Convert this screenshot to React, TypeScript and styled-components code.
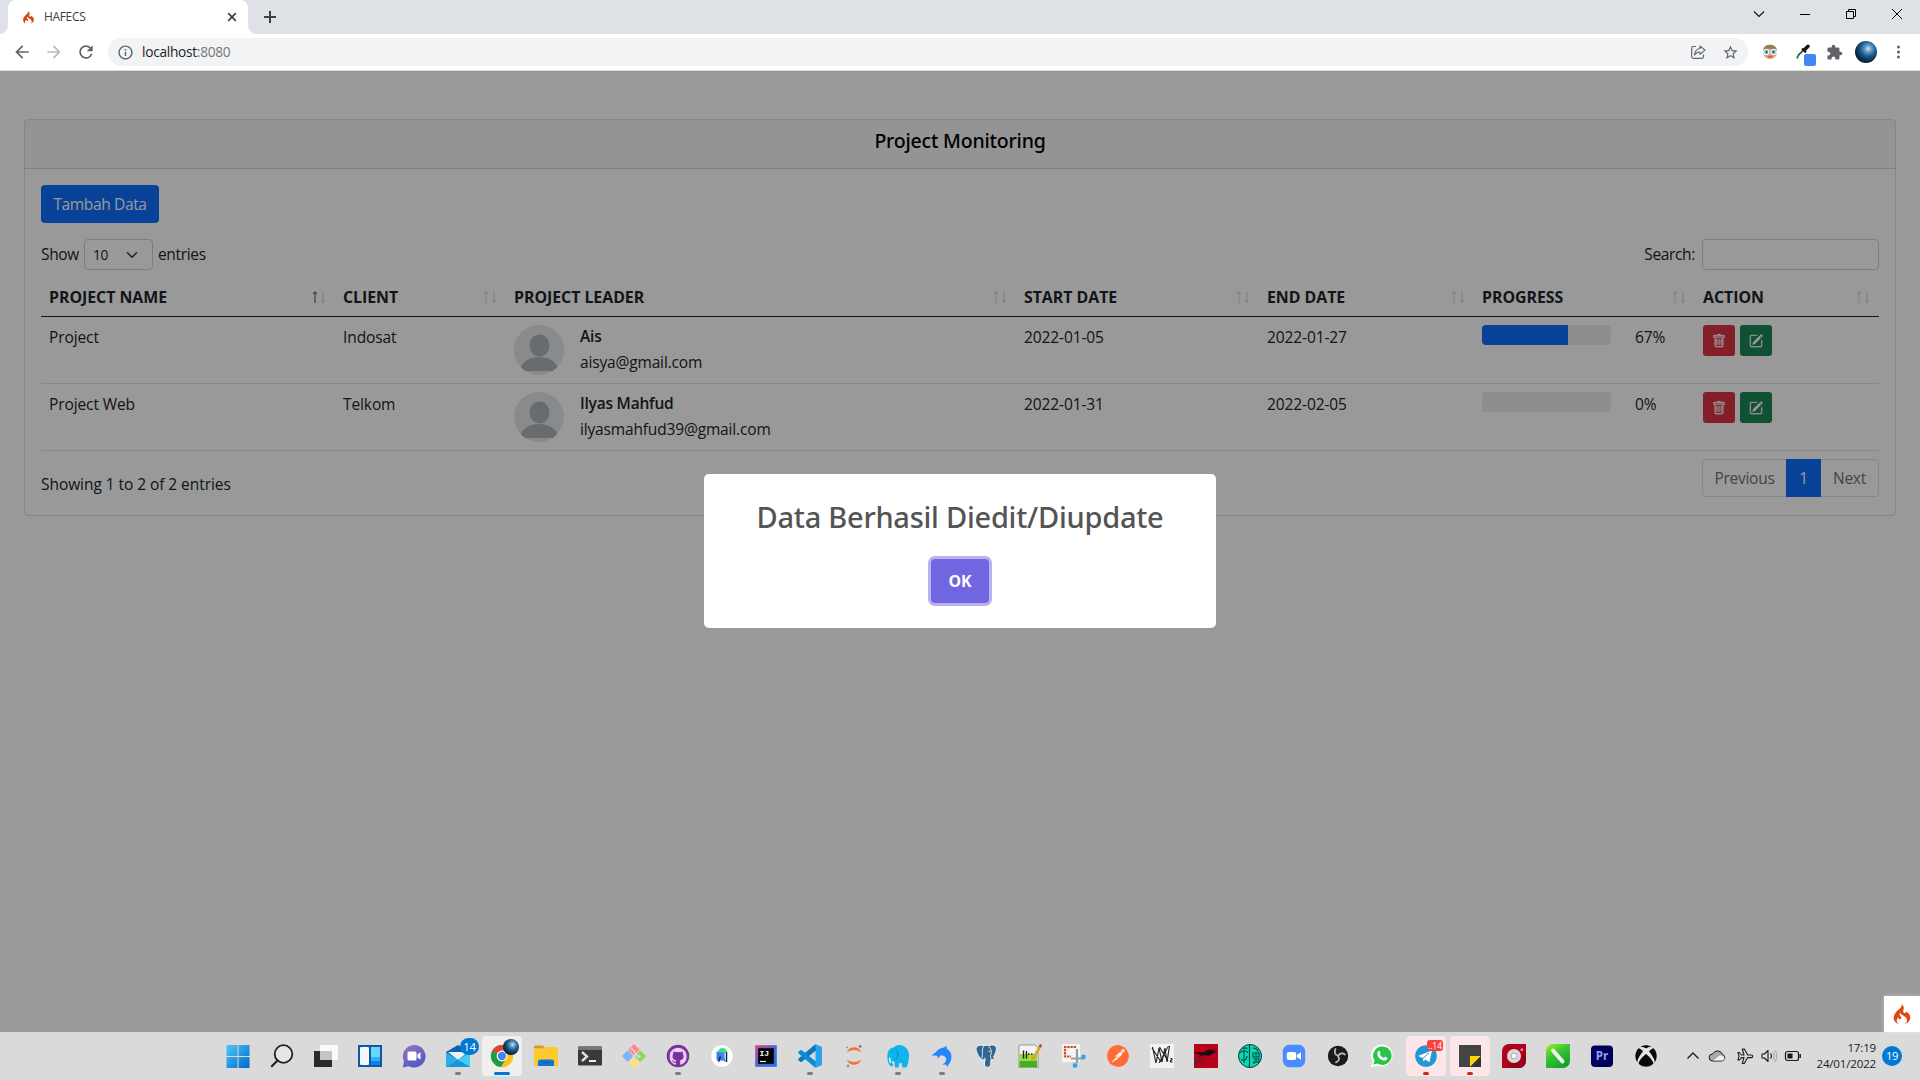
import React from "react";
import styled, { createGlobalStyle } from "styled-components";
import { BsTrash, BsPencilSquare } from "react-icons/bs";
import { SiCodeigniter, SiGithub, SiPostman } from "react-icons/si";
import { FaXbox } from "react-icons/fa";
import { MdExtension, MdRefresh, MdStarBorder, MdArrowBack, MdArrowForward, MdInfoOutline } from "react-icons/md";

const uiFont = `"Segoe UI", "Open Sans", "Noto Sans", sans-serif`;
const mediumFont = `"Noto Sans", "Open Sans", sans-serif`;

const GlobalStyle = createGlobalStyle`
  * { box-sizing: border-box; }
  body { margin: 0; overflow: hidden; font-family: ${uiFont}; }
  svg { display: block; flex: none; }
  button, input, select { font-family: inherit; }
`;

const Screen = styled.div`
  display: flex;
  flex-direction: column;
  width: 1920px;
  height: 1080px;
  overflow: hidden;
`;

/* ---------- Browser chrome ---------- */

const TabStrip = styled.div`
  display: flex;
  height: 34px;
  padding-left: 8px;
  background: #dee1e6;
`;

const Tab = styled.div`
  position: relative;
  display: flex;
  align-items: center;
  width: 240px;
  padding: 0 9px 0 14px;
  background: #fff;
  border-radius: 8px 8px 0 0;
  color: #3c4043;
  &::before, &::after {
    content: "";
    position: absolute;
    bottom: 0;
    width: 8px;
    height: 8px;
  }
  &::before {
    left: -8px;
    background: radial-gradient(circle at 0 0, transparent 7.5px, #fff 8px);
  }
  &::after {
    right: -8px;
    background: radial-gradient(circle at 100% 0, transparent 7.5px, #fff 8px);
  }
`;

const TabTitle = styled.span`
  flex: 1;
  margin-left: 9px;
  font-size: 12px;
  line-height: 16px;
  letter-spacing: -0.34px;
`;

const NewTab = styled.div`
  display: flex;
  align-items: center;
  margin-left: 15px;
`;

const WindowControls = styled.div`
  display: flex;
  margin-left: auto;
`;

const WindowButton = styled.div`
  display: flex;
  align-items: center;
  justify-content: center;
  width: 46px;
  height: 28px;
`;

const Toolbar = styled.div`
  display: flex;
  align-items: center;
  height: 37px;
  padding: 0 6px;
  background: #fff;
  border-bottom: 1px solid #dadce0;
`;

const ToolButton = styled.div<{ $faded?: boolean }>`
  display: flex;
  position: relative;
  align-items: center;
  justify-content: center;
  width: 32px;
  height: 36px;
  color: ${(p) => (p.$faded ? "#babcbe" : "#5f6368")};
`;

const AddressBar = styled.div`
  display: flex;
  align-items: center;
  flex: 1;
  height: 28px;
  margin: 0 6px;
  padding: 0 9px 0 9px;
  border-radius: 14px;
  background: #f1f3f4;
  color: #5f6368;
`;

const Address = styled.span`
  flex: 1;
  margin-left: 8px;
  font-size: 13.7px;
  line-height: 18px;
  letter-spacing: -0.28px;
  color: #202124;
`;

const Port = styled.span`
  color: #74777a;
`;

const AddressActions = styled.div`
  display: flex;
  gap: 16px;
`;

const Swatch = styled.span`
  position: absolute;
  left: 18px;
  top: 20px;
  width: 12px;
  height: 12px;
  border-radius: 2px;
  background: #4285f4;
`;

const ProfileOrb = styled.span<{ $size: number }>`
  width: ${(p) => p.$size}px;
  height: ${(p) => p.$size}px;
  border-radius: 50%;
  background: radial-gradient(circle at 60% 35%, #d5e8f5 0, #6fa0c8 16%, #1f5d8e 38%, #0b2d49 62%, #050d16 90%);
`;

/* ---------- Web page ---------- */

const Viewport = styled.main`
  position: relative;
  flex: 1;
  padding: 48px 24px 0;
  background: #fff;
  color: #212529;
  font-size: 15.5px;
  line-height: 24px;
  letter-spacing: -0.1px;
`;

const Card = styled.section`
  border: 1px solid rgba(0, 0, 0, 0.125);
  border-radius: 4px;
`;

const CardHeader = styled.header`
  height: 49px;
  padding: 8px 16px;
  background: rgba(0, 0, 0, 0.03);
  border-bottom: 1px solid rgba(0, 0, 0, 0.125);
`;

const CardTitle = styled.h5`
  margin: 0;
  font: 500 19.5px/26px ${mediumFont};
  letter-spacing: -0.2px;
  text-align: center;
  color: #000;
`;

const CardBody = styled.div`
  padding: 16px;
`;

const PrimaryButton = styled.button`
  display: block;
  width: 118px;
  height: 38px;
  padding: 0;
  border: 0;
  border-radius: 4px;
  background: #0d6efd;
  color: #fff;
  font-size: 15.5px;
  letter-spacing: -0.36px;
`;

const TableControls = styled.div`
  display: flex;
  justify-content: space-between;
  margin: 16px 0 6px;
`;

const Control = styled.label`
  display: flex;
  align-items: center;
  height: 31px;
  letter-spacing: -0.34px;
`;

const ControlText = styled.span`
  padding-bottom: 1px;
`;

const LengthSelect = styled.span`
  display: flex;
  align-items: center;
  justify-content: space-between;
  width: 69px;
  height: 31px;
  margin: 0 5px;
  padding: 0 14px 0 8px;
  border: 1px solid #ced4da;
  border-radius: 4px;
  font-size: 13.7px;
`;

const SearchInput = styled.input`
  width: 177px;
  height: 31px;
  margin-left: 7px;
  border: 1px solid #ced4da;
  border-radius: 4px;
  background: #fff;
`;

const Table = styled.table`
  width: 1838px;
  table-layout: fixed;
  border-collapse: separate;
  border-spacing: 0;
`;

const Column = styled.col<{ $width: number }>`
  width: ${(p) => p.$width}px;
`;

const HeadCell = styled.th`
  height: 41px;
  padding: 1px 8px 0;
  border-bottom: 1px solid #212529;
  text-align: left;
  font-weight: 700;
  font-size: 15.9px;
  letter-spacing: -0.04px;
`;

const HeadContent = styled.div`
  display: flex;
  align-items: center;
  justify-content: space-between;
`;

const Cell = styled.td`
  height: 67px;
  padding: 8px;
  vertical-align: top;
  border-bottom: 1px solid #dee2e6;
`;

const Leader = styled.div`
  display: flex;
  gap: 16px;
`;

const LeaderText = styled.div`
  display: flex;
  flex-direction: column;
  gap: 2px;
  letter-spacing: -0.16px;
`;

const LeaderName = styled.h6`
  margin: 0;
  font: 600 15.5px/23px "Open Sans", sans-serif;
  letter-spacing: -0.22px;
`;

const Progress = styled.div`
  display: flex;
  gap: 24px;
`;

const Track = styled.div`
  width: 129px;
  height: 20px;
  overflow: hidden;
  border-radius: 4px;
  background: #e9ecef;
`;

const Fill = styled.div`
  height: 100%;
  background: #0d6efd;
`;

const Actions = styled.div`
  display: flex;
  gap: 5px;
`;

const ActionButton = styled.button<{ $color: string }>`
  display: flex;
  align-items: center;
  justify-content: center;
  width: 32px;
  height: 31px;
  padding: 1px 0 0;
  border: 0;
  border-radius: 3px;
  background: ${(p) => p.$color};
  color: #fff;
  svg {
    stroke: #fff;
    stroke-width: 0.35px;
  }
`;

const TableFooter = styled.div`
  display: flex;
  justify-content: space-between;
  height: 48px;
  padding-top: 8px;
`;

const Info = styled.div`
  padding-top: 13px;
  letter-spacing: -0.06px;
`;

const Pagination = styled.div`
  display: flex;
  width: 177px;
  height: 38px;
`;

const PageLink = styled.span<{ $width: number; $active?: boolean; $edge?: "left" | "right" }>`
  display: flex;
  align-items: center;
  justify-content: center;
  width: ${(p) => p.$width}px;
  border: 1px solid ${(p) => (p.$active ? "#0d6efd" : "#dee2e6")};
  border-left-width: ${(p) => (p.$edge === "right" ? 0 : 1)}px;
  border-right-width: ${(p) => (p.$edge === "left" ? 0 : 1)}px;
  border-radius: ${(p) => (p.$edge === "left" ? "4px 0 0 4px" : p.$edge === "right" ? "0 4px 4px 0" : "0")};
  background: ${(p) => (p.$active ? "#0d6efd" : "#fff")};
  color: ${(p) => (p.$active ? "#fff" : "#6c757d")};
  letter-spacing: -0.28px;
`;

/* ---------- Dialog ---------- */

const Backdrop = styled.div`
  position: absolute;
  inset: 0;
  display: flex;
  align-items: center;
  justify-content: center;
  padding-bottom: 1px;
  background: rgba(0, 0, 0, 0.4);
`;

const Dialog = styled.div`
  display: flex;
  flex-direction: column;
  align-items: center;
  width: 512px;
  height: 154px;
  padding-top: 25px;
  border-radius: 5px;
  background: #fff;
`;

const DialogTitle = styled.h2`
  margin: 0;
  font: 500 29px/36px ${mediumFont};
  letter-spacing: -0.25px;
  color: #545454;
`;

const DialogButton = styled.button`
  width: 58px;
  height: 44px;
  margin-top: 24px;
  padding: 0 0 1px;
  border: 0;
  border-radius: 4px;
  background: #7066e0;
  box-shadow: 0 0 0 3px rgba(112, 102, 224, 0.5);
  color: #fff;
  font-size: 15.8px;
  font-weight: 700;
  letter-spacing: -0.1px;
`;

const DebugBadge = styled.div`
  position: absolute;
  right: 0;
  bottom: 0;
  display: flex;
  align-items: center;
  justify-content: center;
  width: 36px;
  height: 36px;
  background: #fff;
  box-shadow: 0 0 4px rgba(255, 255, 255, 0.4);
`;

/* ---------- Taskbar ---------- */

const Taskbar = styled.footer`
  display: flex;
  height: 48px;
  padding-left: 216px;
  background: #dadada;
`;

const TaskItem = styled.div<{ $tint?: string; $mark?: string; $wide?: boolean }>`
  position: relative;
  display: flex;
  align-items: center;
  justify-content: center;
  width: 40px;
  height: 40px;
  margin: 4px 2px;
  border-radius: 4px;
  background: ${(p) => p.$tint ?? "transparent"};
  &::after {
    content: "";
    position: absolute;
    left: 50%;
    bottom: 1px;
    width: ${(p) => (p.$wide ? 16 : 6)}px;
    height: 3px;
    border-radius: 2px;
    transform: translateX(-50%);
    background: ${(p) => p.$mark ?? "transparent"};
  }
`;

const CountBadge = styled.span`
  position: absolute;
  left: 22px;
  top: 2px;
  width: 19px;
  height: 17px;
  border-radius: 9px;
  background: #0078d4;
  color: #fff;
  font-size: 11.5px;
  line-height: 17px;
  letter-spacing: -0.3px;
  text-align: center;
`;

const AlertBadge = styled.span`
  position: absolute;
  left: 21px;
  top: 4px;
  width: 16px;
  height: 11px;
  border-radius: 3px;
  background: #f4433c;
  color: #fff;
  font-size: 8.5px;
  line-height: 12px;
  text-align: center;
`;

const OrbBadge = styled.span`
  position: absolute;
  left: 21px;
  top: 3px;
  display: flex;
`;

const Tray = styled.div`
  display: flex;
  align-items: center;
  margin-left: 14px;
`;

const TrayIcon = styled.div<{ $gap?: number }>`
  display: flex;
  justify-content: center;
  width: 22px;
  margin-left: ${(p) => p.$gap ?? 2}px;
`;

const Clock = styled.div`
  width: 72px;
  text-align: right;
  font-size: 11.6px;
  line-height: 16px;
  letter-spacing: -0.2px;
  color: #1b1b1b;
`;

const NoticeCount = styled.div`
  width: 20px;
  height: 20px;
  margin-left: 6px;
  border-radius: 50%;
  background: #0078d4;
  color: #fff;
  font-size: 11.2px;
  line-height: 19px;
  letter-spacing: -0.3px;
  text-align: center;
`;

/* ---------- Drawings ---------- */

const Icon = ({ size = 24, box = 24, children }: { size?: number; box?: number; children: React.ReactNode }) => (
  <svg width={size} height={size} viewBox={`0 0 ${box} ${box}`} fill="none">
    {children}
  </svg>
);

const Avatar = ({ id }: { id: string }) => (
  <svg width="50" height="50" viewBox="0 0 50 50">
    <defs>
      <clipPath id={id}>
        <circle cx="25" cy="25" r="25" />
      </clipPath>
    </defs>
    <g clipPath={`url(#${id})`}>
      <rect width="50" height="50" fill="#e4e6e8" />
      <ellipse cx="25.5" cy="20.5" rx="10" ry="11" fill="#aeb4b7" />
      <path d="M6 46C7 37 15 32 25 32s19 5 19 14z" fill="#aeb4b7" />
    </g>
  </svg>
);

const SortArrows = ({ ascending }: { ascending?: boolean }) => (
  <svg width="16" height="14" viewBox="0 0 16 14" fill="none" stroke="#212529">
    <path d="M4 13V2M2 4l2-2.200L6 4" strokeOpacity={ascending ? 0.8 : 0.2} />
    <path d="M12 1.500v11M10 10.300l2 2.200 2-2.200" strokeOpacity="0.2" />
  </svg>
);

type Task = { icon: React.ReactNode; tint?: string; mark?: string; wide?: boolean; badge?: React.ReactNode };
const grey = "#7d7d7d";

const tasks: Task[] = [
  {
    icon: (
      <Icon>
        <defs>
          <linearGradient id="win" x1="0" y1="0" x2="1" y2="1">
            <stop stopColor="#4cc8fb" />
            <stop offset="1" stopColor="#0067c8" />
          </linearGradient>
        </defs>
        <path d="M.5 1h11v11H.5zM12.5 1h11v11h-11zM.5 13h11v11H.5zM12.5 13h11v11h-11z" fill="url(#win)" />
      </Icon>
    ),
  },
  {
    icon: (
      <Icon>
        <circle cx="13.500" cy="10" r="8.800" fill="#e6e6e6" stroke="#222" strokeWidth="1.800" />
        <path d="M7.500 16.500L1.800 22.200" stroke="#222" strokeWidth="2.200" strokeLinecap="round" />
      </Icon>
    ),
  },
  {
    icon: (
      <Icon>
        <path d="M0 7h18v16H0z" fill="#2a2a2a" />
        <path d="M6 1h18v15H6z" fill="#fafafa" />
        <path d="M6 7h12v9H6z" fill="#c4c4c4" />
      </Icon>
    ),
  },
  {
    icon: (
      <Icon>
        <path d="M0 1h24v22H0z" fill="#0f58a8" />
        <rect x="2" y="3" width="9" height="18" rx="1" fill="#f4f7fb" />
        <path d="M13 3h9v10h-9z" fill="#6bd6fd" />
        <path d="M13 13h9v8h-9z" fill="#0a84e4" />
        <path d="M13 13h9v4h-9z" fill="#2fb0f5" />
      </Icon>
    ),
  },
  {
    icon: (
      <Icon>
        <defs>
          <linearGradient id="chat" x1="0" y1="0" x2=".6" y2="1">
            <stop stopColor="#9a74b5" />
            <stop offset="1" stopColor="#5059c9" />
          </linearGradient>
        </defs>
        <path d="M12 1a11.3 11.3 0 11-5 21.3L.8 23.4 2 17.3A11.3 11.3 0 0112 1z" fill="url(#chat)" />
        <rect x="5.5" y="7.5" width="9" height="9" rx="1.5" fill="#fff" />
        <path d="M15.5 10.5l3-2.2v7.5l-3-2.2z" fill="#fff" />
      </Icon>
    ),
  },
  {
    icon: (
      <Icon>
        <path d="M0 8l12-7 12 7v14H0z" fill="#1160a8" />
        <path d="M2 8h20l-10 8z" fill="#e8f2fa" />
        <path d="M0 8l12 8 12-8v15H0z" fill="#29aee6" />
        <path d="M24 8v15L12 16z" fill="#45cdf5" />
        <path d="M0 23l12-7 12 7z" fill="#1a95dc" />
      </Icon>
    ),
    mark: grey,
    badge: <CountBadge>14</CountBadge>,
  },
  {
    icon: (
      <Icon>
        <circle cx="12" cy="12" r="11.2" fill="#fbc116" />
        <path d="M12 12L2.3 6.4A11.2 11.2 0 0011 23.100l5-8.600z" fill="#1e9c4a" />
        <path d="M12 12L2.3 6.4A11.2 11.2 0 0121.7 6.6H12z" fill="#df4237" />
        <circle cx="12" cy="12" r="5.4" fill="#fff" />
        <circle cx="12" cy="12" r="4.2" fill="#4285f4" />
      </Icon>
    ),
    tint: "#efefef",
    mark: "#0078d4",
    wide: true,
    badge: (
      <OrbBadge>
        <ProfileOrb $size={16} />
      </OrbBadge>
    ),
  },
  {
    icon: (
      <Icon>
        <path d="M0 3a1.5 1.5 0 011.5-1.5H9l2 3H0z" fill="#dc9a10" />
        <path d="M0 5h9.5l2-2H22a2 2 0 012 2v17H0z" fill="#fdc92f" />
        <path d="M4 22v-4.500a2 2 0 012-2h12a2 2 0 012 2V22z" fill="#1477cf" />
        <path d="M8 18.500h8" stroke="#0b5a9f" />
      </Icon>
    ),
  },
  {
    icon: (
      <Icon>
        <rect y="2.5" width="24" height="19" rx="1.2" fill="#3a3a3a" />
        <path d="M0 6V3.5a1 1 0 011-1h22a1 1 0 011 1V6z" fill="#777" />
        <path d="M4 8l5 4.500L4 17" stroke="#ddd" strokeWidth="2.4" />
        <path d="M11 17h7" stroke="#fff" strokeWidth="1.8" />
      </Icon>
    ),
  },
  {
    icon: (
      <Icon>
        <g transform="rotate(45 12 12)">
          <rect x="3.5" y="3.5" width="8.200" height="8.200" rx="1" fill="#ff8a85" />
          <rect x="12.500" y="3.500" width="8.200" height="8.200" rx="1" fill="#8cd65c" />
          <rect x="3.500" y="12.500" width="8.200" height="8.200" rx="1" fill="#80b3ff" />
          <rect x="12.500" y="12.500" width="8.200" height="8.200" rx="1" fill="#ffe07a" />
        </g>
        <path d="M9 4l4 4v8M13 9l4 4" stroke="#dadada" strokeWidth="1.3" />
        <circle cx="13" cy="16" r="1.600" fill="#dadada" />
        <circle cx="17" cy="12.500" r="1.600" fill="#dadada" />
      </Icon>
    ),
  },
  {
    icon: (
      <Icon>
        <circle cx="12" cy="12" r="11.3" fill="#7d2fa0" />
        <g transform="translate(3.4 3.6)" color="#e4d3ec">
          <SiGithub size={17.4} />
        </g>
      </Icon>
    ),
    mark: grey,
  },
  {
    icon: (
      <Icon>
        <circle cx="12" cy="12" r="10.8" fill="#fff" />
        <rect x="6.500" y="7.500" width="8" height="9" rx="1" fill="#3a7be8" />
        <path d="M8 8.500a4.500 4.500 0 019 0z" fill="#3ddc84" />
        <path d="M9 17.500l3-8 3 8M10.500 14.500h3" stroke="#4285f4" strokeWidth="1.600" />
        <path d="M16.500 8v10M8.500 17.500l2-5" stroke="#0b2c4a" strokeWidth="1.500" />
      </Icon>
    ),
  },
  {
    icon: (
      <Icon>
        <defs>
          <linearGradient id="idea" x1="0" y1="0" x2="1" y2="1">
            <stop stopColor="#e0457c" />
            <stop offset=".45" stopColor="#5a5fd0" />
            <stop offset="1" stopColor="#087cfa" />
          </linearGradient>
        </defs>
        <path d="M1.200 1.200h21.600v21.600H1.200z" fill="url(#idea)" />
        <path d="M4.200 4.200h15.600v15.600H4.200z" fill="#000" />
        <text x="5.500" y="12" fill="#fff" fontFamily="Liberation Mono" fontWeight="700" fontSize="8">IJ</text>
        <path d="M6 17.500h6" stroke="#fff" strokeWidth="1.2" />
      </Icon>
    ),
  },
  {
    icon: (
      <Icon>
        <path d="M17.5 0L24 3v18l-6.500 3z" fill="#27a4f0" />
        <path d="M18 6.500L3.200 18.200.3 16.300v-1.500L17.500 0z" fill="#0a78c0" />
        <path d="M18 17.500L3.200 5.800.3 7.700v1.500L17.500 24z" fill="#0f8bd6" />
      </Icon>
    ),
    mark: grey,
  },
  {
    icon: (
      <Icon>
        <path d="M4.500 8.500C6 5 9 3.300 12 3.300s6 1.700 7.500 5.200C17.500 6.900 15 6 12 6S6.500 6.900 4.500 8.500zM4.500 15.500C6 19 9 20.700 12 20.700s6-1.700 7.500-5.200c-2 1.600-4.500 2.500-7.500 2.500s-5.500-.9-7.500-2.500z" fill="#f37726" />
        <circle cx="18.200" cy="2.400" r="1.300" fill="#767677" />
        <circle cx="6" cy="22" r="1.400" fill="#989798" />
        <circle cx="5" cy="3.500" r=".8" fill="#767677" />
      </Icon>
    ),
  },
  {
    icon: (
      <Icon>
        <path d="M1.500 10C2 6 4.500 3.500 8 3.500 10 1 13 .5 16 1.500c5 1.500 7.500 6 7 11-.3 4-1 8-2.500 11h-4l-1-4.500h-2l-1 4.500H9L8.500 18c-.8-.3-1.500-1-2-1.500-1 1.500-.5 3.500 1 4.500-.5 1.200-1.500 1.600-2.500 1.200-3-1.700-4-7-3.500-12.200z" fill="#10b3ec" />
        <path d="M9 4.500c3.500 2 4 8 .5 11M6 7.500l1 .5" stroke="#0888bd" />
        <path d="M3.800 13.500c-.5 2.500 0 4 .8 5.500" stroke="#fff" strokeWidth="1.400" />
      </Icon>
    ),
    mark: grey,
  },
  {
    icon: (
      <Icon>
        <path d="M1.500 11.500L6 8c1.800-2.600 4.200-3.900 7-4.200L16.500 2l.3 2.800c4 2.400 5.500 6.600 4.200 11.200-.5 1.800-1.300 3.200-2.500 4.500l-.8 2.500-1.700-2.400-3.500.2 2.700-2.600c1.600-2.400 1.300-4.700-.7-6-1.300-.8-2.800-1-4-.9L8 14.500l-.8-2.700c-1.900-.2-3.700-.2-5.700-.3z" fill="#2684fc" />
      </Icon>
    ),
    mark: grey,
  },
  {
    icon: (
      <Icon>
        <path
          d="M2.500 3C4.500.500 8 1 9.500 2c2-1 4-1 5.500-.2C18 .300 21.500 1 22.300 3.500c.7 3-1 6.500-2.800 9.500l1.500 1.500c-1.200 1-2.500 1-4 .8l-.3 5.200c-.4 2-2 3-3.700 2.800-1.800-.2-2.500-1.500-2.500-3.300v-4.500c-1.500.5-3 .5-4.500-1.500C3.500 10.500 1 6 2.500 3z"
          fill="#336791"
          stroke="#eef2f5"
          strokeWidth="1"
        />
        <path d="M9.500 2.500C8 5 8.300 8 8.500 10.500c.1 2-1 3-.3 4M15 2.500c2.500 3 3 6 1.500 9l.5 3M14.500 7.500l1.500-.2M10 13.500c1 .5 1.500 2 1.500 3" stroke="#e6edf2" strokeWidth="1" />
      </Icon>
    ),
  },
  {
    icon: (
      <Icon>
        <path d="M1 1h16l3 3v20H1z" fill="#f4f4f4" stroke="#777" strokeWidth=".7" />
        <path d="M1.500 10H19v13.500H1.500z" fill="#9bdb3c" />
        <path d="M1.500 17H19v6.500H1.500z" fill="#45ad22" />
        <path d="M5.500 6.500v8M8.500 7v7.500M10 10h1.500M13 10h1.500" stroke="#222" strokeWidth="1.400" />
        <path d="M22.500 2l-9 15" stroke="#dca726" strokeWidth="2.600" />
        <path d="M23.200 .6l-1.500 2.600" stroke="#b44b3e" strokeWidth="2.600" />
      </Icon>
    ),
  },
  {
    icon: (
      <Icon>
        <rect width="18" height="18" rx="1" fill="#f5f5f7" />
        <path d="M14 3H3v9.500h6" stroke="#dc4a20" strokeWidth="2.200" strokeDasharray="2.400 .8" />
        <path d="M15 5v14M9 14.500h12" stroke="#9a9da0" strokeWidth="2.200" />
        <circle cx="21.500" cy="13" r="2.400" fill="#31a8ea" />
        <circle cx="13" cy="21.500" r="2.400" fill="#31a8ea" />
      </Icon>
    ),
  },
  {
    icon: (
      <Icon>
        <circle cx="12" cy="12" r="10.900" fill="#fff" />
        <g transform="translate(1.100 1.100)" color="#ff6c37"><SiPostman size={21.800} /></g>
      </Icon>
    ),
  },
  {
    icon: (
      <Icon>
        <path d="M0 0h24v24H0z" fill="#f3f3f3" />
        <path d="M2.500 3l3.500 16L9 4l3 14L15 4l2 14 2.500-16M2 4l9 14M9.500 3l8.500 14" stroke="#1c1c1c" strokeWidth="1.100" />
        <path d="M18.500 2L9 19" stroke="#1c1c1c" strokeWidth="1" />
        <path d="M20.500 14.500h1.500v1.700h-1.500v1.800h2" stroke="#111" />
      </Icon>
    ),
  },
  {
    icon: (
      <Icon>
        <path d="M0 0h24v24H0z" fill="#b80018" />
        <path d="M0 12l10-2L0 24z" fill="#950f26" />
        <path d="M0 8l9 .5 5-2.500 3-.5 6 1.500-4 1 3 .8-4 1-3 2.200-5-1-5 2 1.500-2.500-5-1z" fill="#1d0a10" />
        <path d="M1 20l8-5M4 24l6-7" stroke="#5b1a2a" />
      </Icon>
    ),
  },
  {
    icon: (
      <Icon>
        <circle cx="12" cy="12" r="11.500" fill="#0bd9b6" stroke="#063f3b" />
        <path d="M11.500 1v22M2 9c2-3 7-3 8 0M6 6v13M3 15c2 3 6 1 6-3M15 4c3 0 5 2 5 4M15 9h6v4h-6zM15 15h6v3h-6M9 5c-1-2-3-1-4 0M16 20v-2M18 9v4M18 15v3" stroke="#04423f" strokeWidth="1.100" />
      </Icon>
    ),
  },
  {
    icon: (
      <Icon>
        <rect x=".8" y=".8" width="22.400" height="22.400" rx="6.500" fill="#4a8cff" />
        <rect x="4.800" y="8" width="9.400" height="8" rx="2" fill="#fff" />
        <path d="M15 10.800l4-2.600v7.600l-4-2.600z" fill="#fff" />
      </Icon>
    ),
  },
  {
    icon: (
      <Icon>
        <circle cx="12" cy="12" r="10.200" fill="#1b1b1d" />
        <path d="M12 11.500c-3-.5-4-3.500-2.500-6.500M12.400 12c1-3 4-3.500 6.500-1.500M12 12.400c2 2.200 1 5-2 6" stroke="#bdbdbd" strokeWidth="1.700" strokeLinecap="round" />
      </Icon>
    ),
  },
  {
    icon: (
      <Icon>
        <path d="M12 .5a11 11 0 11-5 21l-6 2 1.700-6A11 11 0 0112 .5z" fill="#fff" />
        <path d="M12 2.500a9.200 9.200 0 11-4.500 17L3.300 20.600l1.200-4A9.200 9.200 0 0112 2.500z" fill="#27c546" />
        <path d="M8.800 6.800c.9-.5 1.300.8 1.700 1.900.2.700-.8 1.300-.6 1.700.8 1.600 2 2.700 3.700 3.400.5.200 1.100-1.200 1.600-1 1.200.4 2.500 1 2.200 1.600-.8 2.400-2.900 2.500-4.900 1.800-2.900-1-4.900-3.400-5.200-6.200-.1-1.300.6-2.700 1.500-3.200z" fill="#fff" />
      </Icon>
    ),
  },
  {
    icon: (
      <Icon>
        <circle cx="12" cy="12" r="10.800" fill="#2197d3" />
        <path d="M4 12l14-5.500-2.600 11.800-4-2.800-2.200 2v-3.300L4 12z" fill="#fff" />
        <path d="M9.200 14.200L15 9" stroke="#2197d3" />
      </Icon>
    ),
    tint: "#fde6e7",
    mark: "#c42b1c",
    badge: <AlertBadge>..14</AlertBadge>,
  },
  {
    icon: (
      <Icon>
        <path d="M1 1h22v22H1z" fill="#444" />
        <path d="M12 12h11L12 23z" fill="#fcd800" />
        <path d="M23 12L12 23h11z" fill="#333" />
      </Icon>
    ),
    tint: "#fde6e7",
    mark: "#c42b1c",
  },
  {
    icon: (
      <Icon>
        <path d="M7 0h17v17a7 7 0 01-7 7H0V7a7 7 0 017-7z" fill="#b2001f" />
        <path d="M24 8v9a7 7 0 01-7 7H5z" fill="#8a0016" opacity=".7" />
        <circle cx="12" cy="12" r="7" fill="#d9d9d9" />
        <circle cx="12" cy="12" r="3" fill="#f5f5f5" stroke="#aaa" />
        <circle cx="19.800" cy="5.800" r="1.300" fill="#e8a5b0" />
      </Icon>
    ),
  },
  {
    icon: (
      <Icon>
        <defs>
          <linearGradient id="corel" x1="0" y1="0" x2=".6" y2="1">
            <stop stopColor="#a4f01c" />
            <stop offset=".5" stopColor="#35c435" />
            <stop offset="1" stopColor="#14a32c" />
          </linearGradient>
        </defs>
        <path d="M7 0h17v17a7 7 0 01-7 7H0V7a7 7 0 017-7z" fill="url(#corel)" />
        <path d="M7 6.500l9.500 11" stroke="#f2f2f2" strokeWidth="4" strokeLinecap="round" />
      </Icon>
    ),
  },
  {
    icon: (
      <Icon>
        <rect x="1" y="1.500" width="22" height="21.500" rx="4" fill="#00005b" />
        <text x="12" y="16" textAnchor="middle" fill="#9c9cff" fontFamily="Open Sans" fontWeight="700" fontSize="11.500">Pr</text>
      </Icon>
    ),
  },
  {
    icon: (
      <Icon>
        <circle cx="12" cy="12" r="9.500" fill="#e6e6e6" />
        <g transform="translate(1 1)" color="#0a0a0a"><FaXbox size={22} /></g>
      </Icon>
    ),
  },
];

/* ---------- Data ---------- */

const columns = [
  { label: "PROJECT NAME", width: 294 },
  { label: "CLIENT", width: 171 },
  { label: "PROJECT LEADER", width: 510 },
  { label: "START DATE", width: 243 },
  { label: "END DATE", width: 215 },
  { label: "PROGRESS", width: 221 },
  { label: "ACTION", width: 184 },
];

const projects = [
  { name: "Project", client: "Indosat", leader: "Ais", email: "aisya@gmail.com", start: "2022-01-05", end: "2022-01-27", progress: 67 },
  { name: "Project Web", client: "Telkom", leader: "Ilyas Mahfud", email: "ilyasmahfud39@gmail.com", start: "2022-01-31", end: "2022-02-05", progress: 0 },
];

function BrowserChrome() {
  return (
    <>
      <TabStrip>
        <Tab>
          <SiCodeigniter size={13} color="#d4481b" />
          <TabTitle>HAFECS</TabTitle>
          <Icon size={14} box={14}>
            <path d="M3.200 3.200l7.600 7.600M10.800 3.200l-7.600 7.600" stroke="#3c4043" strokeWidth="1.700" />
          </Icon>
        </Tab>
        <NewTab>
          <Icon size={14} box={14}>
            <path d="M7 1v12M1 7h12" stroke="#3c4043" strokeWidth="2" />
          </Icon>
        </NewTab>
        <WindowControls>
          <WindowButton>
            <Icon size={12} box={12}>
              <path d="M1 3.500l5 5 5-5" stroke="#111" strokeWidth="1.100" />
            </Icon>
          </WindowButton>
          <WindowButton>
            <Icon size={10} box={10}>
              <path d="M0 5.500h10" stroke="#000" />
            </Icon>
          </WindowButton>
          <WindowButton>
            <Icon size={10} box={10}>
              <path d="M.5 2.500h7v7h-7zM2.500 2.500v-2h7v7h-2" stroke="#000" />
            </Icon>
          </WindowButton>
          <WindowButton>
            <Icon size={10} box={10}>
              <path d="M0 0l10 10M10 0L0 10" stroke="#000" />
            </Icon>
          </WindowButton>
        </WindowControls>
      </TabStrip>
      <Toolbar>
        <ToolButton><MdArrowBack size={20} /></ToolButton>
        <ToolButton $faded><MdArrowForward size={20} /></ToolButton>
        <ToolButton><MdRefresh size={20} /></ToolButton>
        <AddressBar>
          <MdInfoOutline size={17} />
          <Address>
            localhost<Port>:8080</Port>
          </Address>
          <AddressActions>
            <Icon size={16} box={16}>
              <path d="M6 2.500H3.500a1.800 1.800 0 00-1.800 1.800v8.200a1.800 1.800 0 001.800 1.800h8.200a1.800 1.800 0 001.800-1.800V10.500" stroke="#5f6368" strokeWidth="1.200" />
              <path d="M10 2l5 4.200-5 4.200V8C7.500 8 6 8.800 4.500 11 4.800 7.500 6.500 5 10 4.500z" stroke="#5f6368" strokeWidth="1.100" strokeLinejoin="round" />
            </Icon>
            <MdStarBorder size={17} />
          </AddressActions>
        </AddressBar>
        <ToolButton>
          <Icon size={16} box={16}>
            <circle cx="8" cy="8" r="7" fill="#df9a72" />
            <path d="M1 6.500C1.500 2 5 .8 8 .8s6.500 1.200 7 5.700C12 4 4 4 1 6.500z" fill="#9c7a4f" />
            <circle cx="4.300" cy="8" r="2.700" fill="#86bccb" stroke="#e8f3f5" strokeWidth="1.100" />
            <circle cx="11.700" cy="8" r="2.700" fill="#86bccb" stroke="#e8f3f5" strokeWidth="1.100" />
            <circle cx="4.600" cy="8" r=".9" fill="#234" />
            <circle cx="11.400" cy="8" r=".9" fill="#234" />
            <path d="M6 12.800h4" stroke="#b8552f" />
          </Icon>
        </ToolButton>
        <ToolButton>
          <Icon size={16} box={16}>
            <path d="M3 14.500L4.500 11l5-5" stroke="#2f6b46" strokeWidth="1.800" />
            <path d="M8 4.500l4 4" stroke="#111" strokeWidth="2" />
            <path d="M10.500 5.800L14 2.300" stroke="#111" strokeWidth="3.400" strokeLinecap="round" />
          </Icon>
          <Swatch />
        </ToolButton>
        <ToolButton><MdExtension size={17} /></ToolButton>
        <ToolButton><ProfileOrb $size={22} /></ToolButton>
        <ToolButton>
          <Icon size={16} box={16}>
            <g fill="#5f6368">
              <circle cx="8.500" cy="3" r="1.500" />
              <circle cx="8.500" cy="8" r="1.500" />
              <circle cx="8.500" cy="13" r="1.500" />
            </g>
          </Icon>
        </ToolButton>
      </Toolbar>
    </>
  );
}

function ProjectTable() {
  return (
    <Table>
      <colgroup>
        {columns.map((c) => (
          <Column key={c.label} $width={c.width} />
        ))}
      </colgroup>
      <thead>
        <tr>
          {columns.map((c, i) => (
            <HeadCell key={c.label}>
              <HeadContent>
                {c.label}
                <SortArrows ascending={i === 0} />
              </HeadContent>
            </HeadCell>
          ))}
        </tr>
      </thead>
      <tbody>
        {projects.map((p, i) => (
          <tr key={p.name}>
            <Cell>{p.name}</Cell>
            <Cell>{p.client}</Cell>
            <Cell>
              <Leader>
                <Avatar id={`avatar-${i}`} />
                <LeaderText>
                  <LeaderName>{p.leader}</LeaderName>
                  <span>{p.email}</span>
                </LeaderText>
              </Leader>
            </Cell>
            <Cell>{p.start}</Cell>
            <Cell>{p.end}</Cell>
            <Cell>
              <Progress>
                <Track>
                  <Fill style={{ width: `${p.progress}%` }} />
                </Track>
                {p.progress}%
              </Progress>
            </Cell>
            <Cell>
              <Actions>
                <ActionButton $color="#dc3545"><BsTrash size={14} /></ActionButton>
                <ActionButton $color="#198754"><BsPencilSquare size={14} /></ActionButton>
              </Actions>
            </Cell>
          </tr>
        ))}
      </tbody>
    </Table>
  );
}

function SystemTray() {
  return (
    <Tray>
      <TrayIcon $gap={0}>
        <Icon size={14} box={14}>
          <path d="M1.500 9.500L7 4l5.500 5.500" stroke="#1b1b1b" strokeWidth="1.300" />
        </Icon>
      </TrayIcon>
      <TrayIcon>
        <Icon size={18} box={18}>
          <path d="M4.500 14h9a3.400 3.400 0 001-6.600A5.300 5.300 0 004.700 7 3.500 3.500 0 004.500 14z" fill="#a9a9a9" stroke="#1b1b1b" />
          <path d="M5 13.500L11 9c1.500-.8 5-.5 5.500 2 0 1.500-1 2.500-2.500 2.500z" fill="#f0f0f0" />
        </Icon>
      </TrayIcon>
      <TrayIcon $gap={6}>
        <Icon size={18} box={18}>
          <path d="M2 5.500h1.500L5.500 8H8L6.300 2h2l3.400 6H15.500a1.300 1.300 0 010 2.600h-3.800L8.300 16.500h-2L8 10.600H5.500L3.500 13H2l1-3.700z" stroke="#1b1b1b" strokeWidth="1.100" strokeLinejoin="round" />
        </Icon>
      </TrayIcon>
      <TrayIcon>
        <Icon size={18} box={18}>
          <path d="M2 7h2.500L8 3.500v11L4.500 11H2z" stroke="#1b1b1b" strokeWidth="1.100" strokeLinejoin="round" />
          <path d="M10.500 6.500c1.200 1.500 1.200 3.500 0 5" stroke="#1b1b1b" strokeWidth="1.100" />
          <path d="M12.600 4.800c2 2.500 2 5.900 0 8.400M14.700 3c2.700 3.500 2.700 8.500 0 12" stroke="#aaa" strokeWidth="1.100" />
        </Icon>
      </TrayIcon>
      <TrayIcon>
        <Icon size={18} box={18}>
          <rect x="1.500" y="4.500" width="13" height="9" rx="2" stroke="#1b1b1b" strokeWidth="1.200" />
          <rect x="3.500" y="6.500" width="5" height="5" fill="#1b1b1b" />
          <path d="M16.200 7v4" stroke="#1b1b1b" strokeWidth="1.500" />
        </Icon>
      </TrayIcon>
      <Clock>
        <div>17:19</div>
        <div>24/01/2022</div>
      </Clock>
      <NoticeCount>19</NoticeCount>
    </Tray>
  );
}

export default function App() {
  return (
    <Screen>
      <GlobalStyle />
      <BrowserChrome />
      <Viewport>
        <Card>
          <CardHeader>
            <CardTitle>Project Monitoring</CardTitle>
          </CardHeader>
          <CardBody>
            <PrimaryButton>Tambah Data</PrimaryButton>
            <TableControls>
              <Control>
                <ControlText>Show</ControlText>
                <LengthSelect>
                  10
                  <Icon size={12} box={16}>
                    <path d="M2 5l6 6 6-6" stroke="#343a40" strokeWidth="2" strokeLinecap="round" strokeLinejoin="round" />
                  </Icon>
                </LengthSelect>
                <ControlText>entries</ControlText>
              </Control>
              <Control>
                <ControlText>Search:</ControlText>
                <SearchInput />
              </Control>
            </TableControls>
            <ProjectTable />
            <TableFooter>
              <Info>Showing 1 to 2 of 2 entries</Info>
              <Pagination>
                <PageLink $width={84} $edge="left">Previous</PageLink>
                <PageLink $width={35} $active>1</PageLink>
                <PageLink $width={58} $edge="right">Next</PageLink>
              </Pagination>
            </TableFooter>
          </CardBody>
        </Card>
        <Backdrop>
          <Dialog role="dialog">
            <DialogTitle>Data Berhasil Diedit/Diupdate</DialogTitle>
            <DialogButton>OK</DialogButton>
          </Dialog>
        </Backdrop>
        <DebugBadge>
          <SiCodeigniter size={20} color="#dd4814" />
        </DebugBadge>
      </Viewport>
      <Taskbar>
        {tasks.map((t, i) => (
          <TaskItem key={i} $tint={t.tint} $mark={t.mark} $wide={t.wide}>
            {t.icon}
            {t.badge}
          </TaskItem>
        ))}
        <SystemTray />
      </Taskbar>
    </Screen>
  );
}
